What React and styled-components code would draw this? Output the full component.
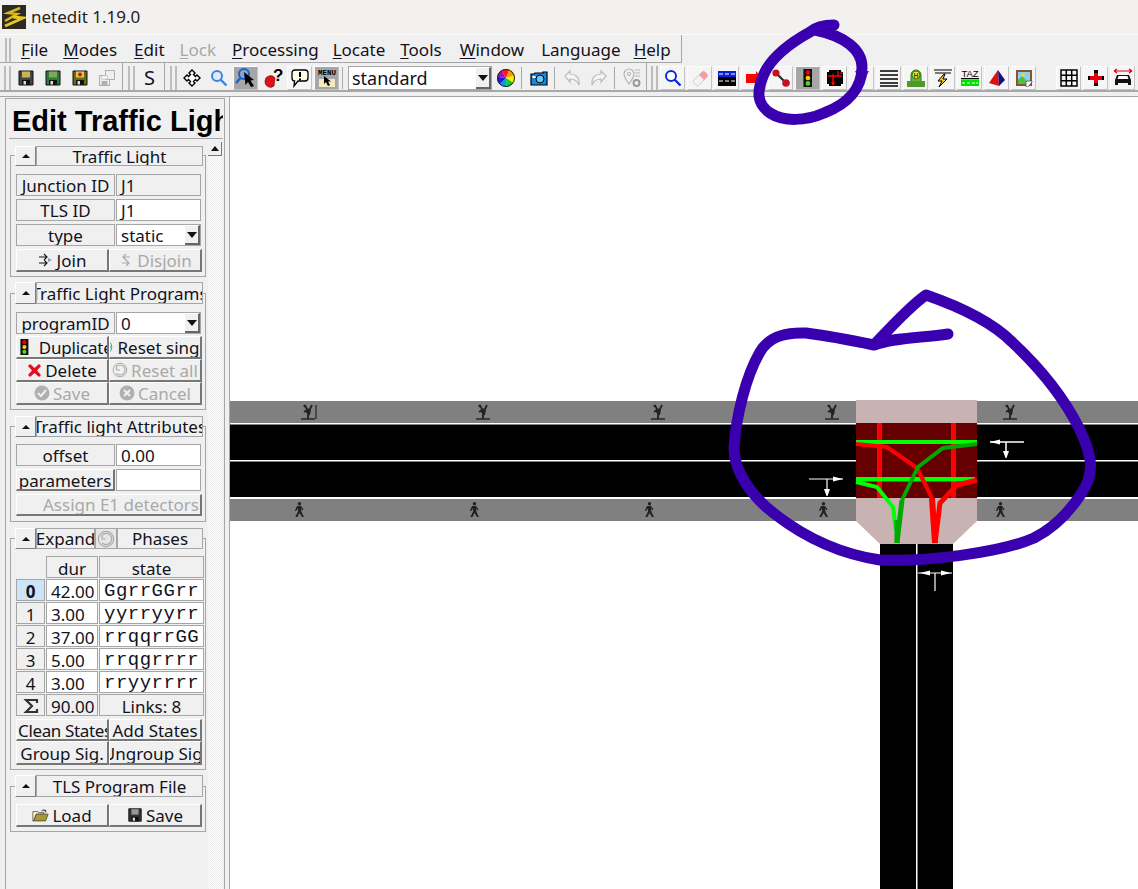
import React from 'react';
import styled, { createGlobalStyle } from 'styled-components';

const GlobalStyle = createGlobalStyle`
  html, body { margin: 0; padding: 0; background: #f0f0f0; overflow: hidden; }
  * { box-sizing: border-box; }
`;

const UI_FONT = `"Noto Sans", "Liberation Sans", sans-serif`;
const LINE = '#a6a6a6';

const Page = styled.div`
  position: relative;
  width: 1138px;
  height: 889px;
  display: flex;
  flex-direction: column;
  overflow: hidden;
  background: #f0f0f0;
  color: #10131c;
  font: 17px/1 ${UI_FONT};
`;

const TitleBar = styled.div`
  height: 35px;
  flex: none;
  display: flex;
  align-items: center;
  gap: 5px;
  padding: 0 2px 1px;
  background: #f3f1ef;
  border-bottom: 1px solid #fbfbfb;
`;

const AppTitle = styled.span`
  font-size: 17px;
  color: #222;
`;

const MenuRow = styled.div`
  height: 28px;
  flex: none;
  display: flex;
`;

const MenuBar = styled.div`
  width: 682px;
  display: flex;
  align-items: center;
  padding: 2px 0 0 5px;
  border-right: 1px solid ${LINE};
  border-bottom: 1px solid ${LINE};
`;

const Grip = styled.div`
  width: ${p => p.$w || 7}px;
  height: ${p => p.$h || 24}px;
  flex: none;
  margin-right: 1px;
  border-left: 2px solid #bdbdbd;
  border-right: 2px solid #bdbdbd;
`;

const MenuItem = styled.span`
  margin-left: ${p => p.$x}px;
  color: ${p => (p.$off ? '#a8a8a8' : '#10131c')};
  white-space: nowrap;
  u { text-underline-offset: 2px; }
`;

const ToolRow = styled.div`
  height: 29px;
  flex: none;
  display: flex;
  align-items: center;
  border-bottom: 2px solid #a8a8a8;
`;

const ToolGroup = styled.div`
  width: ${p => p.$w}px;
  height: 100%;
  flex: none;
  display: flex;
  align-items: center;
  padding: 3px 0 0 ${p => p.$pad}px;
  border-right: ${p => (p.$open ? 'none' : `1px solid ${LINE}`)};
`;

const ToolBtn = styled.div`
  width: 25px;
  height: 24px;
  margin: 0 1px;
  flex: none;
  display: flex;
  align-items: center;
  justify-content: center;
  font-size: 20px;
  background: ${p => (p.$active ? '#a6a6a6' : p.$raised ? '#f5f5f5' : 'transparent')};
  border: ${p => (p.$active || p.$raised ? '1px solid' : '0')};
  border-color: #fdfdfd #c4c4c4 #c4c4c4 #fdfdfd;
`;

const ToolSep = styled.div`
  width: 1px;
  height: 22px;
  flex: none;
  margin: 0 3px 0 2px;
  background: #a8a8a8;
`;

const ToolGap = styled.div`
  width: 18px;
  flex: none;
`;

const Combo = styled.div`
  width: ${p => p.$w || '100%'};
  height: ${p => p.$h || '100%'};
  margin-left: ${p => p.$left || 0}px;
  flex: none;
  display: flex;
  align-items: center;
  justify-content: space-between;
  padding-left: ${p => p.$pad || 4}px;
  background: #fff;
  border: 1px solid ${LINE};
  font-size: ${p => p.$size || 17}px;
`;

const ComboArrow = styled.span`
  width: 15px;
  height: 100%;
  display: flex;
  align-items: center;
  justify-content: center;
  background: #f0f0f0;
  border-right: 2px solid #666;
  border-bottom: 2px solid #666;
  border-top: 1px solid #fff;
  &::after {
    content: '';
    border-left: 5px solid transparent;
    border-right: 5px solid transparent;
    border-top: 6px solid #111;
  }
`;

const Main = styled.div`
  flex: 1;
  min-height: 0;
  display: flex;
  margin-top: 4px;
  border-top: 1px solid ${LINE};
`;

const Side = styled.aside`
  width: 230px;
  flex: none;
  padding-left: 5px;
  border-right: 1px solid ${LINE};
`;

const SideInner = styled.div`
  width: 220px;
  height: 100%;
  border: 1px solid ${LINE};
  border-bottom: 0;
  padding: 0 2px 0 4px;
  margin-top: 1px;
`;

const PanelTitle = styled.h1`
  margin: 0 0 0 -1px;
  height: 40px;
  padding: 4px 0 0 3px;
  width: 214px;
  overflow: hidden;
  white-space: nowrap;
  font: bold 29px/36px "Liberation Sans", sans-serif;
  color: #000;
  border-bottom: 1px solid ${LINE};
`;

const SideBody = styled.div`
  display: flex;
  align-items: flex-start;
  gap: 2px;
`;

const GroupColumn = styled.div`
  width: 196px;
  flex: none;
  padding-top: 16px;
  display: flex;
  flex-direction: column;
  gap: 16px;
`;

const ScrollTrack = styled.div`
  width: 14px;
  height: 750px;
  flex: none;
  margin-top: 3px;
  background: repeating-conic-gradient(#fff 0 25%, #ececec 0 50%) 0 0 / 2px 2px;
`;

const ScrollUp = styled.div`
  height: 14px;
  display: flex;
  align-items: center;
  justify-content: center;
  background: #f0f0f0;
  border-right: 1px solid #777;
  border-bottom: 1px solid #777;
  &::after {
    content: '';
    border-left: 4px solid transparent;
    border-right: 4px solid transparent;
    border-bottom: 5px solid #111;
  }
`;

const Frame = styled.section`
  border: 1px solid ${LINE};
  padding: 0 4px ${p => p.$foot || 4}px 5px;
`;

const FrameHead = styled.div`
  display: flex;
  height: ${p => p.$h}px;
  margin: ${p => -p.$up}px -2px ${p => p.$below}px -1px;
`;

const Toggle = styled.div`
  width: 21px;
  flex: none;
  display: flex;
  align-items: center;
  justify-content: center;
  background: #f0f0f0;
  border: 1px solid ${LINE};
  border-color: #fff #808080 #808080 #fff;
  &::after {
    content: '';
    border-left: 4px solid transparent;
    border-right: 4px solid transparent;
    border-bottom: 4px solid #111;
  }
`;

const Cell = styled.div`
  min-width: 0;
  height: ${p => p.$h || 22}px;
  flex: ${p => p.$flex || 'none'};
  display: flex;
  align-items: center;
  justify-content: ${p => (p.$left ? 'flex-start' : 'center')};
  padding-left: ${p => (p.$left ? 4 : 0)}px;
  overflow: hidden;
  white-space: nowrap;
  background: ${p => p.$bg || '#f0f0f0'};
  border: 1px solid ${LINE};
  font-weight: ${p => (p.$bold ? 700 : 400)};
`;

const HeadTitle = styled(Cell)`
  flex: 1;
  height: 100%;
`;

const Rows = styled.div`
  display: flex;
  flex-direction: column;
  gap: ${p => p.$gap ?? 3}px;
`;

const FieldRow = styled.div`
  display: grid;
  grid-template-columns: 99px 85px;
  gap: 1px;
  height: ${p => p.$h || 22}px;
`;

const ButtonRow = styled.div`
  display: grid;
  grid-template-columns: ${p => (p.$one ? '186px' : '93px 93px')};
  height: ${p => p.$h || 23}px;
  margin-top: ${p => p.$top || 0}px;
`;

const Button = styled.div`
  min-width: 0;
  display: flex;
  align-items: center;
  justify-content: ${p => (p.$start ? 'flex-start' : 'center')};
  gap: ${p => p.$gap || 3}px;
  padding-left: ${p => p.$start || 0}px;
  padding-top: ${p => p.$drop || 0}px;
  overflow: hidden;
  white-space: nowrap;
  letter-spacing: ${p => p.$tight || 0}px;
  background: #f0f0f0;
  color: ${p => (p.$off ? '#a9a9a9' : '#10131c')};
  border-top: 1px solid #fff;
  border-left: 1px solid #fff;
  border-right: 2px solid #777;
  border-bottom: 2px solid #777;
  svg { flex: none; }
`;

const RaisedLabel = styled(Button)`
  height: 22px;
  padding-top: 2px;
`;

const IconSpace = styled.span`
  width: 22px;
  flex: none;
`;

const Table = styled.div`
  display: grid;
  grid-template-columns: 29px 52px 105px;
  grid-auto-rows: 22px;
  gap: 1px;
  margin-right: -3px;
  ${Cell} { padding-top: 2px; }
`;

const StateText = styled.span`
  font: 19px "Liberation Mono", monospace;
  letter-spacing: 0.5px;
`;

const Canvas = styled.main`
  flex: 1;
  min-width: 0;
  background: #fff;
  overflow: hidden;
`;

const NetworkSvg = styled.svg`
  display: block;
  width: 908px;
  height: 792px;
`;

const Scribble = styled.svg`
  position: absolute;
  inset: 0;
  width: 1138px;
  height: 889px;
  pointer-events: none;
`;

const FlipSvg = styled.svg`
  transform: ${p => (p.$flip ? 'scaleX(-1)' : 'none')};
`;

const Ico = ({ s = 18, w, h, children }) => (
  <svg viewBox={`0 0 ${w || s} ${h || s}`} width={w || s} height={h || s}>{children}</svg>
);

const Logo = () => (
  <svg viewBox="0 0 24 24" width="24" height="24">
    <rect width="24" height="24" fill="#2b2b22" />
    <path d="M3 16 L15 9 L6 8 L18 3" fill="none" stroke="#d9b71c" strokeWidth="2.6" />
    <path d="M3 21 L21 13 L11 12" fill="none" stroke="#e8c820" strokeWidth="3" />
  </svg>
);

const Floppy = ({ label = '#c9b45a', body = '#444', dot, s = 18 }) => (
  <svg viewBox="0 0 18 18" width={s} height={s}>
    <path d="M2 2h14v14H2z" fill={body} stroke="#111" />
    <rect x="5" y="2.500" width="8" height="6" fill={label} />
    <rect x="5" y="11" width="8" height="5" fill="#111" />
    <rect x="6.500" y="12" width="2.500" height="3.500" fill="#ddd" />
    {dot && <circle cx="9" cy="5.500" r="2" fill="#e01010" />}
  </svg>
);

const FloppyPair = () => (
  <Ico>
    <rect x="1.500" y="6.500" width="10" height="10" fill="#eee" stroke="#b0b0b0" />
    <rect x="7.500" y="1.500" width="9" height="9" fill="#eee" stroke="#b0b0b0" />
    <rect x="3.500" y="12" width="6" height="4" fill="#b0b0b0" />
    <rect x="3.500" y="7" width="6" height="3" fill="#fff" stroke="#ccc" />
  </Ico>
);

const MoveIcon = () => (
  <Ico>
    <path d="M9 1 12 4 10.500 5.500 12.500 7.500 14 6 17 9 14 12 12.500 10.500 10.500 12.500 12 14 9 17 6 14 7.500 12.500 5.500 10.500 4 12 1 9 4 6 5.500 7.500 7.500 5.500 6 4Z" fill="#fff" stroke="#000" strokeWidth="1.400" />
  </Ico>
);

const LensIcon = ({ color = '#3f84dc', fill = '#dcebf9' }) => (
  <Ico>
    <circle cx="7" cy="7" r="5" fill={fill} stroke={color} strokeWidth="2" />
    <path d="M10.500 10.500 16.500 16.500" stroke={color} strokeWidth="2.400" />
  </Ico>
);

const InspectIcon = () => (
  <Ico s={22}>
    <circle cx="9" cy="7" r="5" fill="#8aa6c6" stroke="#1c5fcf" strokeWidth="2" />
    <path d="M5.500 11 1 16" stroke="#1c5fcf" strokeWidth="2.400" />
    <path d="M9 5 L19 13 L15.500 13.500 L19 19 L16 20 L13 15 L10.500 18Z" fill="#000" />
  </Ico>
);

const QuestionIcon = () => (
  <Ico s={20}>
    <path d="M2 13a5.500 5.500 0 0 1 10-3l-1 8a5.500 5.500 0 0 1-9-5z" fill="#e01018" stroke="#600" strokeWidth=".6" />
    <text x="10" y="13" fontFamily="Liberation Sans" fontSize="17" fontWeight="700" fill="#000">?</text>
  </Ico>
);

const BubbleIcon = () => (
  <Ico s={20}>
    <path d="M5 2h10c2 0 3 1 3 3v5c0 2-1 3-3 3H8l-4 5 .6-5C3 13 2 12 2 10V5c0-2 1-3 3-3z" fill="#fffde8" stroke="#000" strokeWidth="1.300" />
    <path d="M10 4v5M10 10.500v2" stroke="#000" strokeWidth="2" />
  </Ico>
);

const MenuIcon = () => (
  <Ico s={22}>
    <text x="11" y="8" textAnchor="middle" fontFamily="Liberation Mono" fontSize="7.500" fontWeight="700" fill="#000">MENU</text>
    <rect x="3" y="12" width="16" height="8" fill="#f6e9c0" />
    <path d="M8 9v8l2-2 2 4 2-1-2-3.500h3z" fill="#000" />
  </Ico>
);

const sector = (a0, a1) => {
  const r = 9;
  const p = a => `${9 + r * Math.cos(a * Math.PI / 180)} ${9 + r * Math.sin(a * Math.PI / 180)}`;
  return `M9 9L${p(a0)}A${r} ${r} 0 0 1 ${p(a1)}Z`;
};

const WheelIcon = () => (
  <Ico>
    {['#ff1a1a', '#ff9a00', '#f4f000', '#11cc22', '#00a0d8', '#1a20d0', '#a010b0'].map((c, i) => (
      <path key={c} d={sector(-120 + i * 51.4, -120 + (i + 1) * 51.4)} fill={c} />
    ))}
    <circle cx="9" cy="9" r="8.500" fill="none" stroke="#222" />
  </Ico>
);

const CameraIcon = () => (
  <Ico>
    <path d="M1 5h3l1-1h8V3h4v13H1z" fill="#1788e0" stroke="#000" strokeWidth="1.200" />
    <circle cx="10" cy="10" r="4" fill="#6cc4ff" stroke="#000" />
    <rect x="2.500" y="7" width="3" height="2" fill="#fff" />
  </Ico>
);

const TurnIcon = ({ flip }) => (
  <FlipSvg viewBox="0 0 20 18" width="20" height="18" $flip={flip}>
    <path d="M3 7l5-5v3c5 0 10 3 9 11-1.500-4-4-6-9-6v3z" fill="#f6f6f6" stroke="#bcbcbc" strokeWidth="1.200" />
  </FlipSvg>
);

const LocateIcon = () => (
  <Ico s={20}>
    <path d="M7 1a5 5 0 0 1 5 5c0 3-3 7-5 10-2-3-5-7-5-10a5 5 0 0 1 5-5z" fill="none" stroke="#b5b5b5" strokeWidth="1.200" />
    <circle cx="7" cy="6" r="1.600" fill="none" stroke="#b5b5b5" />
    <path d="M13 2h5M13 5h5M13 8h5" stroke="#b5b5b5" />
    <circle cx="14.500" cy="15" r="3" fill="none" stroke="#9a9a9a" strokeWidth="2" />
  </Ico>
);

const EraserIcon = () => (
  <Ico>
    <path d="M3 11 11 3c1-1 2-1 3 0l2 2c1 1 1 2 0 3l-8 8c-1 1-2 1-3 0l-2-2c-1-1-1-2 0-3z" fill="#f4f4f4" stroke="#ccc" />
    <path d="M8 6 11 3c1-1 2-1 3 0l2 2c1 1 1 2 0 3l-3 3z" fill="#f2a0a6" />
  </Ico>
);

const LanesIcon = () => (
  <Ico s={18}>
    <rect y="2" width="18" height="15" fill="#000" />
    <rect y="2" width="18" height="6" fill="#0a20e0" />
    <path d="M1 5h4M7 5h4M13 5h4M1 12h4M7 12h4M13 12h4" stroke="#fff" />
  </Ico>
);

const RedArrowIcon = () => (
  <Ico>
    <rect x="1" y="5" width="11" height="9" fill="#f00" />
    <path d="M11 2 17 9.500 11 16z" fill="#f00" />
  </Ico>
);

const RedDownIcon = () => (
  <Ico>
    <path d="M2 2h6L5 8zM10 2h6l-3 6z" fill="#e80010" />
    <path d="M5 8 9 16 13 8" fill="none" stroke="#e80010" />
  </Ico>
);

const LinkIcon = () => (
  <Ico>
    <path d="M4 4 14 14" stroke="#222" strokeWidth="2" />
    <circle cx="4" cy="4" r="3.600" fill="#c81020" />
    <circle cx="14" cy="14" r="3.800" fill="#c81020" />
  </Ico>
);

const SignalIcon = ({ s = 18 }) => (
  <svg viewBox="0 0 10 20" width={s * 0.55} height={s}>
    <rect width="10" height="20" fill="#111" />
    <circle cx="5" cy="4" r="2.600" fill="#f00000" />
    <circle cx="5" cy="10" r="2.600" fill="#ffd000" />
    <circle cx="5" cy="16" r="2.600" fill="#40e020" />
  </svg>
);

const CrossingIcon = () => (
  <Ico>
    <rect x="1" y="1" width="16" height="16" fill="#000" />
    <path d="M1 1h2v2H1zM15 1h2v2h-2zM1 15h2v2H1zM15 15h2v2h-2z" fill="#fff" />
    <path d="M2 7h14M7 5v11M12 2v5" stroke="#f00" strokeWidth="1.400" />
    <path d="M5 13h4l-2 4zM14 5h3l-1.500-3z" fill="#f00" />
  </Ico>
);

const LinesIcon = () => (
  <Ico>
    <path d="M0 2h18M0 6h18M0 10h18M0 14h18M0 17h18" stroke="#000" strokeWidth="1.700" />
  </Ico>
);

const BusIcon = () => (
  <Ico s={20}>
    <path d="M5 16V7a5 5 0 0 1 10 0v9z" fill="#6cb030" stroke="#2c7a14" />
    <rect x="1" y="13" width="18" height="6" fill="#4c9a28" />
    <circle cx="10" cy="7" r="4" fill="#ffe040" stroke="#2c7a14" />
    <text x="10" y="10" textAnchor="middle" fontFamily="Liberation Sans" fontSize="7" fontWeight="700" fill="#1a5a0c">H</text>
  </Ico>
);

const BoltIcon = () => (
  <Ico s={20}>
    <path d="M1 2h18M2 5h16" stroke="#000" strokeWidth="1.200" />
    <path d="M11 6 5 13h4l-3 6 8-8h-4l2-5z" fill="#f7c910" stroke="#000" strokeWidth="1" />
  </Ico>
);

const TazIcon = () => (
  <Ico s={20}>
    <text x="10" y="9" textAnchor="middle" fontFamily="Liberation Sans" fontSize="9.500" fill="#000">TAZ</text>
    <rect x="1" y="10" width="18" height="1.300" fill="#000" />
    <rect x="1" y="12" width="18" height="6" fill="#00e000" />
    <path d="M2 15h3M7 15h3M12 15h3M16 15h2" stroke="#fff" strokeWidth="1.200" />
  </Ico>
);

const PolyIcon = () => (
  <Ico>
    <path d="M10 1 1 14l10 3z" fill="#e01010" />
    <path d="M10 1 11 17l6-6z" fill="#101080" />
  </Ico>
);

const PictureIcon = () => (
  <Ico>
    <rect x="1" y="1" width="16" height="16" fill="#8a5230" />
    <rect x="3" y="3" width="12" height="12" fill="#8ad0f0" />
    <path d="M3 11 7 7l5 5v3H3z" fill="#50c040" />
    <circle cx="8" cy="6" r="1.800" fill="#f7d820" />
    <path d="M11 17v-4l1-1h5v1l-4 5h-2z" fill="#fff" stroke="#444" strokeWidth=".7" />
  </Ico>
);

const GridIcon = () => (
  <Ico>
    <path d="M1 1h16v16H1zM6.300 1v16M11.700 1v16M1 6.300h16M1 11.700h16" fill="none" stroke="#000" strokeWidth="1.500" />
  </Ico>
);

const PlusIcon = () => (
  <Ico>
    <path d="M7 1h4v6h6v4h-6v6H7v-6H1V7h6z" fill="#e00010" />
    <path d="M7 1h4v3H7zM7 14h4v3H7zM1 7h2v4H1zM15 7h2v4h-2z" fill="#000" />
  </Ico>
);

const CarIcon = () => (
  <Ico s={20}>
    <path d="M1 3h18M1 3l3-2M1 3l3 2M19 3l-3-2M19 3l-3 2" stroke="#e00010" strokeWidth="1.200" fill="none" />
    <path d="M2 12l2-5h12l2 5v5h-3v-2H5v2H2z" fill="#111" />
    <path d="M5.500 8h9l1 3h-11z" fill="#fff" />
  </Ico>
);

const JoinIcon = ({ color = '#111', dot = '#7a9cc0' }) => (
  <Ico s={16}>
    <path d="M1 5h8M6 2l3 3-3 3M1 11h8M6 8l3 3-3 3" fill="none" stroke={color} strokeWidth="1.100" />
    <path d="M10 6l4 2-4 2z" fill={dot} />
  </Ico>
);

const DisjoinIcon = () => (
  <Ico s={14}>
    <path d="M12 4H5M8 1 5 4l3 3M4 10h7M8 7l3 3-3 3" fill="none" stroke="#aaa" strokeWidth="1.200" />
  </Ico>
);

const ResetIcon = ({ color = '#aaa', s = 16 }) => (
  <svg viewBox="0 0 16 16" width={s} height={s}>
    <circle cx="8" cy="8" r="6.800" fill="none" stroke={color} />
    <path d="M4.500 4.500a5 5 0 1 1 0 7M4.500 4.500v3.500h3.500" fill="none" stroke={color} strokeWidth="1.100" />
  </svg>
);

const RedX = () => (
  <Ico s={15}>
    <path d="M3 1l4.500 4L12 1l2 2-4 4.500 4 4.500-2 2-4.500-4L3 14l-2-2 4-4.500L1 3z" fill="#e01020" />
  </Ico>
);

const RoundMark = ({ cross }) => (
  <Ico s={16}>
    <circle cx="8" cy="8" r="7.500" fill="#b0b0b0" />
    <path d={cross ? 'M5 5l6 6M11 5l-6 6' : 'M4 8l3 3 5-6'} fill="none" stroke="#f0f0f0" strokeWidth="2" />
  </Ico>
);

const FolderIcon = () => (
  <svg viewBox="0 0 20 16" width="17" height="14">
    <path d="M1 4h6l1 1h6v2H5L2 15H1z" fill="#fff6c0" stroke="#333" strokeWidth=".8" />
    <path d="M5 7h14l-3 8H2z" fill="#a89a30" stroke="#333" strokeWidth=".8" />
    <path d="M11 3c2-2 4-2 6 0l-1 .500 2 1.500-3-.5.500-1c-1-1-3-1-4 0z" fill="#333" />
  </svg>
);

const SigmaIcon = () => (
  <Ico s={16}>
    <path d="M2 2h12v3M14 2H3l6 6-6 6h11v-3" fill="none" stroke="#333" strokeWidth="2.200" />
  </Ico>
);

const Bike = ({ x }) => (
  <g transform={`translate(${x} 404)`} fill="none" stroke="#222" strokeWidth="1.300">
    <path d="M-7 15H7" strokeWidth="1.400" />
    <path d="M0 15V8L-3 1M0 9 4 1M-1 6-4 8M1 11 2 6M-3 3-4 1" strokeWidth="1.800" />
    <circle cx="0" cy="7" r="2.400" fill="#222" stroke="none" />
  </g>
);

const Walker = ({ x }) => (
  <g transform={`translate(${x} 502)`} fill="#222">
    <circle cx="0.500" cy="1.800" r="1.700" />
    <path d="M-2 4h4l2.500 3.500-1 .8L2 6.500 2.500 10l2.500 5h-2L0.500 11-1.500 15h-2.200L-1 9.500V6.500L-3 9h-1.200z" />
  </g>
);

const ArrowH = ({ x, y, dir }) => (
  <path d={dir > 0 ? `M${x} ${y - 2.500}l10 2.500-10 2.500z` : `M${x} ${y - 2.500}l-10 2.500 10 2.500z`} fill="#fff" />
);

const Network = () => (
  <NetworkSvg viewBox="230 97 908 792">
    <rect x="230" y="401" width="908" height="120" fill="#808080" />
    <rect x="230" y="423" width="908" height="76" fill="#fff" />
    <rect x="230" y="424.500" width="908" height="35.500" fill="#000" />
    <rect x="230" y="461.500" width="908" height="35.500" fill="#000" />
    <rect x="880" y="544" width="73" height="345" fill="#000" />
    <rect x="916" y="544" width="1.500" height="345" fill="#fff" />
    <path d="M856 400H977V521L953 544H880L856 521Z" fill="#c9b2b2" />
    <rect x="856" y="423" width="121" height="75" fill="#660000" />
    <rect x="877" y="423" width="5" height="75" fill="#f00" />
    <rect x="951" y="423" width="5" height="75" fill="#f00" />
    <rect x="856" y="440" width="121" height="4" fill="#0f0" />
    <rect x="856" y="477" width="119" height="4.500" fill="#0f0" />
    <path d="M856 444 887 447 917 468 932 498" fill="none" stroke="#f00" strokeWidth="4" strokeLinejoin="round" />
    <path d="M932 498 935 543" fill="none" stroke="#f00" strokeWidth="6" />
    <path d="M977 480 957 485 940 503 935 543" fill="none" stroke="#f00" strokeWidth="5" />
    <path d="M977 444 943 448 918 467 902 500" fill="none" stroke="#00a800" strokeWidth="4" />
    <path d="M902 500 897 543" fill="none" stroke="#00a800" strokeWidth="5" />
    <path d="M856 482 877 487 893 507 896 530" fill="none" stroke="#0f0" strokeWidth="4" />
    <path d="M897 520 897 543" fill="none" stroke="#00a800" strokeWidth="5" />
    {[308, 483, 658, 832, 1010].map(x => <Bike key={x} x={x} />)}
    <path d="M316 405V419" stroke="#222" strokeWidth="1.200" />
    {[299, 474, 649, 823, 1000].map(x => <Walker key={x} x={x} />)}
    <path d="M990 442H1024M1006 442V454" stroke="#fff" strokeWidth="1.500" />
    <ArrowH x={1000} y={442} dir={-1} />
    <path d="M1003 451h6l-2.500 7h-1z" fill="#fff" />
    <path d="M809 479H843M827 479V491" stroke="#fff" strokeWidth="1.200" />
    <ArrowH x={833} y={479} dir={1} />
    <path d="M824 489h6l-2.500 7h-1z" fill="#fff" />
    <path d="M918 573H952M935 573V591" stroke="#fff" strokeWidth="1.200" />
    <ArrowH x={930} y={573} dir={-1} />
    <ArrowH x={941} y={573} dir={1} />
  </NetworkSvg>
);

const Field = ({ label, children }) => (
  <FieldRow>
    <Cell>{label}</Cell>
    {children}
  </FieldRow>
);

const Group = ({ title, h = 21, up = 11, below = 7, foot, extra, children }) => (
  <Frame $foot={foot}>
    <FrameHead $h={h} $up={up} $below={below}>
      <Toggle />
      {extra}
      <HeadTitle>{title}</HeadTitle>
    </FrameHead>
    {children}
  </Frame>
);

const phases = [
  ['0', '42.00', 'GgrrGGrr'],
  ['1', '3.00', 'yyrryyrr'],
  ['2', '37.00', 'rrqqrrGG'],
  ['3', '5.00', 'rrqgrrrr'],
  ['4', '3.00', 'rryyrrrr'],
];

export default function App() {
  return (
    <Page>
      <GlobalStyle />
      <TitleBar>
        <Logo />
        <AppTitle>netedit 1.19.0</AppTitle>
      </TitleBar>

      <MenuRow>
        <MenuBar>
          <Grip $w={6} />
          <MenuItem $x={9}><u>F</u>ile</MenuItem>
          <MenuItem $x={15}><u>M</u>odes</MenuItem>
          <MenuItem $x={17}><u>E</u>dit</MenuItem>
          <MenuItem $x={15} $off><u>L</u>ock</MenuItem>
          <MenuItem $x={16}><u>P</u>rocessing</MenuItem>
          <MenuItem $x={14}><u>L</u>ocate</MenuItem>
          <MenuItem $x={15}><u>T</u>ools</MenuItem>
          <MenuItem $x={18}><u>W</u>indow</MenuItem>
          <MenuItem $x={17}>Language</MenuItem>
          <MenuItem $x={13}><u>H</u>elp</MenuItem>
        </MenuBar>
      </MenuRow>

      <ToolRow>
        <ToolGroup $w={123} $pad={4}>
          <Grip />
          <ToolBtn><Floppy /></ToolBtn>
          <ToolBtn><Floppy body="#2f7a35" label="#7ea858" /></ToolBtn>
          <ToolBtn><Floppy body="#6a6a10" label="#d8c860" dot /></ToolBtn>
          <ToolBtn><FloppyPair /></ToolBtn>
        </ToolGroup>
        <ToolGroup $w={42} $pad={5}>
          <Grip />
          <ToolBtn>S</ToolBtn>
        </ToolGroup>
        <ToolGroup $w={482} $pad={5}>
          <Grip />
          <ToolBtn><MoveIcon /></ToolBtn>
          <ToolBtn><LensIcon /></ToolBtn>
          <ToolBtn $active><InspectIcon /></ToolBtn>
          <ToolBtn><QuestionIcon /></ToolBtn>
          <ToolBtn $raised><BubbleIcon /></ToolBtn>
          <ToolBtn $active><MenuIcon /></ToolBtn>
          <ToolSep />
          <Combo $w="144px" $h="24px" $left={2} $size={18} $pad={3}>
            standard
            <ComboArrow />
          </Combo>
          <ToolBtn><WheelIcon /></ToolBtn>
          <ToolSep />
          <ToolBtn><CameraIcon /></ToolBtn>
          <ToolSep />
          <ToolBtn><TurnIcon /></ToolBtn>
          <ToolBtn><TurnIcon flip /></ToolBtn>
          <ToolSep />
          <ToolBtn><LocateIcon /></ToolBtn>
        </ToolGroup>
        <ToolGroup $w={491} $pad={4} $open>
          <Grip />
          <ToolBtn $raised><LensIcon color="#0a2be0" fill="#fff" /></ToolBtn>
          <ToolBtn $raised><EraserIcon /></ToolBtn>
          <ToolBtn $raised><LanesIcon /></ToolBtn>
          <ToolBtn $raised><RedArrowIcon /></ToolBtn>
          <ToolBtn $raised><LinkIcon /></ToolBtn>
          <ToolBtn $active><SignalIcon /></ToolBtn>
          <ToolBtn $raised><CrossingIcon /></ToolBtn>
          <ToolBtn $raised><RedDownIcon /></ToolBtn>
          <ToolBtn $raised><LinesIcon /></ToolBtn>
          <ToolBtn $raised><BusIcon /></ToolBtn>
          <ToolBtn $raised><BoltIcon /></ToolBtn>
          <ToolBtn $raised><TazIcon /></ToolBtn>
          <ToolBtn $raised><PolyIcon /></ToolBtn>
          <ToolBtn $raised><PictureIcon /></ToolBtn>
          <ToolGap />
          <ToolBtn $raised><GridIcon /></ToolBtn>
          <ToolBtn $raised><PlusIcon /></ToolBtn>
          <ToolBtn $raised><CarIcon /></ToolBtn>
        </ToolGroup>
      </ToolRow>

      <Main>
        <Side>
          <SideInner>
            <PanelTitle>Edit Traffic Light</PanelTitle>
            <SideBody>
              <GroupColumn>
                <Group title="Traffic Light" h={20} up={10} below={8}>
                  <Rows>
                    <Field label="Junction ID"><Cell $left>J1</Cell></Field>
                    <Field label="TLS ID"><Cell $left $bg="#fff">J1</Cell></Field>
                    <Field label="type">
                      <Combo>static<ComboArrow /></Combo>
                    </Field>
                    <ButtonRow>
                      <Button><JoinIcon />Join</Button>
                      <Button $off $gap={5}><DisjoinIcon />Disjoin</Button>
                    </ButtonRow>
                  </Rows>
                </Group>

                <Group title="Traffic Light Programs" h={22} up={12} below={8}>
                  <Rows $gap={0}>
                    <Field label="programID">
                      <Combo>0<ComboArrow /></Combo>
                    </Field>
                    <ButtonRow $top={2}>
                      <Button $start={3} $gap={10} $tight={-0.2}><SignalIcon s={16} />Duplicate</Button>
                      <Button $gap={5}><ResetIcon color="#3aa79a" />Reset single</Button>
                    </ButtonRow>
                    <ButtonRow>
                      <Button><RedX />Delete</Button>
                      <Button $off><ResetIcon />Reset all</Button>
                    </ButtonRow>
                    <ButtonRow>
                      <Button $off><RoundMark />Save</Button>
                      <Button $off><RoundMark cross />Cancel</Button>
                    </ButtonRow>
                  </Rows>
                </Group>

                <Group title="Traffic light Attributes" foot={5}>
                  <Rows>
                    <Field label="offset"><Cell $left $bg="#fff">0.00</Cell></Field>
                    <FieldRow>
                      <RaisedLabel>parameters</RaisedLabel>
                      <Cell $bg="#fff" />
                    </FieldRow>
                    <ButtonRow $one $h={22}>
                      <Button $off><IconSpace />Assign E1 detectors</Button>
                    </ButtonRow>
                  </Rows>
                </Group>

                <Group
                  title="Phases"
                  extra={
                    <>
                      <Cell $flex="0 0 59px" $h={21}>Expand</Cell>
                      <Cell $flex="0 0 22px" $h={21} $bg="#e6e6e6"><ResetIcon s={18} /></Cell>
                    </>
                  }
                >
                  <Rows>
                    <Table>
                      <span />
                      <Cell>dur</Cell>
                      <Cell>state</Cell>
                      {phases.map(([n, dur, state], i) => (
                        <React.Fragment key={n}>
                          <Cell $bold={i === 0} $bg={i === 0 ? '#cce4f7' : undefined}>{n}</Cell>
                          <Cell $left $bg="#fff">{dur}</Cell>
                          <Cell $left $bg="#fff"><StateText>{state}</StateText></Cell>
                        </React.Fragment>
                      ))}
                      <Cell><SigmaIcon /></Cell>
                      <Cell $left>90.00</Cell>
                      <Cell>Links: 8</Cell>
                    </Table>
                    <Rows $gap={0}>
                      <ButtonRow $h={22}>
                        <Button $start={1} $tight={-0.35} $drop={2}>Clean States</Button>
                        <Button $drop={2}>Add States</Button>
                      </ButtonRow>
                      <ButtonRow $h={24}>
                        <Button $drop={2}>Group Sig.</Button>
                        <Button $drop={2}>Ungroup Sig.</Button>
                      </ButtonRow>
                    </Rows>
                  </Rows>
                </Group>

                <Group title="TLS Program File" h={22} up={12}>
                  <ButtonRow>
                    <Button><FolderIcon />Load</Button>
                    <Button><Floppy s={16} body="#333" label="#999" />Save</Button>
                  </ButtonRow>
                </Group>
              </GroupColumn>
              <ScrollTrack>
                <ScrollUp />
              </ScrollTrack>
            </SideBody>
          </SideInner>
        </Side>
        <Canvas>
          <Network />
        </Canvas>
      </Main>

      <Scribble viewBox="0 0 1138 889">
        <g fill="none" stroke="#3a00b0" strokeLinecap="round" strokeLinejoin="round">
          <path
            strokeWidth="11"
            d="M834 25C826 25 816 27 810 32C792 42 772 56 764 74C756 92 757 104 770 113C784 122 806 121 824 113C848 104 862 88 862 67C862 50 845 36 815 30"
          />
          <path
            strokeWidth="11"
            d="M948 334C922 338 896 337 874 345C890 328 910 306 926 295C952 304 990 320 1012 342C1040 368 1064 398 1079 428C1093 456 1095 474 1081 494C1068 514 1054 528 1034 538C1000 553 924 562 880 560C840 554 806 538 776 515C752 497 734 472 734 448C736 416 746 376 760 352C768 338 782 332 806 333C830 336 850 340 874 345"
          />
        </g>
      </Scribble>
    </Page>
  );
}
